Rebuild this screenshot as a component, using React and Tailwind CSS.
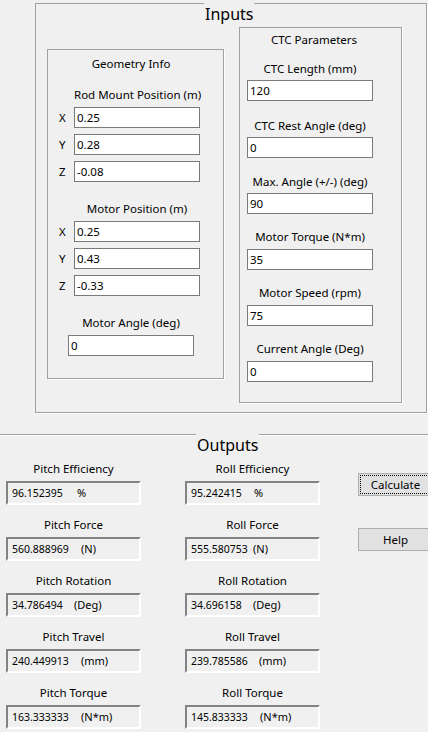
const font = { fontFamily: '"Noto Sans", "Open Sans", sans-serif' };

function Field({ value, className = '' }) {
  return (
    <input
      readOnly
      value={value}
      className={`block h-[21px] w-[126px] border border-[#7a7a7a] bg-white px-[2px] text-[11.5px] leading-[19px] text-black outline-none ${className}`}
    />
  );
}

function GroupTitle({ children, className }) {
  return (
    <span className={`absolute top-[-2px] bg-[#f0f0f0] px-[1px] text-[16px] leading-[24px] text-black ${className}`}>
      {children}
    </span>
  );
}

function XyzRow({ axis, value, first }) {
  return (
    <div className={`flex items-center pl-[11px] ${first ? 'mt-[4px]' : 'mt-[6px]'}`}>
      <span className="w-[15px] text-[11.5px] leading-[16px]">{axis}</span>
      <Field value={value} />
    </div>
  );
}

function Label({ children, className = '' }) {
  return (
    <div className={`h-[16px] w-[126px] text-center text-[11.5px] leading-[16px] whitespace-nowrap ${className}`}>
      {children}
    </div>
  );
}

function CtcItem({ label, value, top, gap }) {
  return (
    <div className="ml-[7px] w-[126px]" style={{ marginTop: top }}>
      <Label>{label}</Label>
      <Field value={value} className={gap} />
    </div>
  );
}

function Output({ label, value, unit, unitAt, first }) {
  return (
    <div className={first ? 'mt-[26px]' : 'mt-[12px]'}>
      <div className="h-[16px] text-center text-[11.5px] leading-[16px] whitespace-nowrap">{label}</div>
      <div className="mt-[4px] flex h-[24px] w-[135px] items-center border-2 border-t-[#838383] border-l-[#838383] border-r-white border-b-white bg-[#f0f0f0] text-[11px] leading-[16px]">
        <span className="pl-[4px] text-[10.5px] whitespace-nowrap" style={{ width: unitAt - 2 }}>{value}</span>
        <span className="whitespace-nowrap">{unit}</span>
      </div>
    </div>
  );
}

const pitch = [
  ['Pitch Efficiency', '96.152395', '%', 71],
  ['Pitch Force', '560.888969', '(N)', 75],
  ['Pitch Rotation', '34.786494', '(Deg)', 68],
  ['Pitch Travel', '240.449913', '(mm)', 75],
  ['Pitch Torque', '163.333333', '(N*m)', 75],
];

const roll = [
  ['Roll Efficiency', '95.242415', '%', 69],
  ['Roll Force', '555.580753', '(N)', 68],
  ['Roll Rotation', '34.696158', '(Deg)', 68],
  ['Roll Travel', '239.785586', '(mm)', 74],
  ['Roll Torque', '145.833333', '(N*m)', 75],
];

export default function App() {
  return (
    <div className="h-[732px] w-[428px] overflow-hidden bg-[#f0f0f0] pt-[3px] text-black" style={font}>
      {/* Inputs group */}
      <div className="relative ml-[35px] flex h-[410px] w-[392px] items-start border border-[#a0a0a0] shadow-[1px_1px_0_#fff]">
        <GroupTitle className="left-[168px]">Inputs</GroupTitle>

        {/* Geometry Info */}
        <div className="ml-[11px] mt-[45px] h-[330px] w-[177px] border border-[#a0a0a0] shadow-[1px_1px_0_#fff]">
          <Label className="ml-[20px] mt-[6px]">Geometry Info</Label>
          <Label className="ml-[26px] mt-[15px]">Rod Mount Position (m)</Label>
          <XyzRow axis="X" value="0.25" first />
          <XyzRow axis="Y" value="0.28" />
          <XyzRow axis="Z" value="-0.08" />
          <Label className="ml-[26px] mt-[19px]">Motor Position (m)</Label>
          <XyzRow axis="X" value="0.25" first />
          <XyzRow axis="Y" value="0.43" />
          <XyzRow axis="Z" value="-0.33" />
          <Label className="ml-[20px] mt-[19px]">Motor Angle (deg)</Label>
          <Field value="0" className="ml-[20px] mt-[4px]" />
        </div>

        {/* CTC Parameters */}
        <div className="ml-[15px] mt-[23px] h-[376px] w-[163px] border border-[#a0a0a0] shadow-[1px_1px_0_#fff]">
          <Label className="ml-[11px] mt-[4px]">CTC Parameters</Label>
          <CtcItem label="CTC Length (mm)" value="120" top={13} gap="mt-[3px]" />
          <CtcItem label="CTC Rest Angle (deg)" value="0" top={17} gap="mt-[3px]" />
          <CtcItem label="Max. Angle (+/-) (deg)" value="90" top={16} gap="mt-[3px]" />
          <CtcItem label="Motor Torque (N*m)" value="35" top={15} gap="mt-[4px]" />
          <CtcItem label="Motor Speed (rpm)" value="75" top={15} gap="mt-[4px]" />
          <CtcItem label="Current Angle (Deg)" value="0" top={15} gap="mt-[4px]" />
        </div>
      </div>

      {/* Outputs group */}
      <div className="relative mt-[21px] flex border-t border-[#a0a0a0] shadow-[inset_0_1px_0_#fff]">
        <GroupTitle className="left-[196px]">Outputs</GroupTitle>

        <div className="ml-[6px] w-[135px]">
          {pitch.map(([l, v, u, at], i) => (
            <Output key={l} label={l} value={v} unit={u} unitAt={at} first={i === 0} />
          ))}
        </div>

        <div className="ml-[44px] w-[135px]">
          {roll.map(([l, v, u, at], i) => (
            <Output key={l} label={l} value={v} unit={u} unitAt={at} first={i === 0} />
          ))}
        </div>

        <div className="ml-[38px] w-[75px] shrink-0">
          <button className="relative mt-[38px] block h-[23px] w-[75px] border border-[#adadad] bg-[#e1e1e1] text-[11.5px] leading-[16px]">
            <span className="absolute inset-[1px] border border-dotted border-black" />
            Calculate
          </button>
          <button className="mt-[32px] block h-[23px] w-[75px] border border-[#adadad] bg-[#e1e1e1] text-[11.5px] leading-[16px]">
            Help
          </button>
        </div>
      </div>
    </div>
  );
}
